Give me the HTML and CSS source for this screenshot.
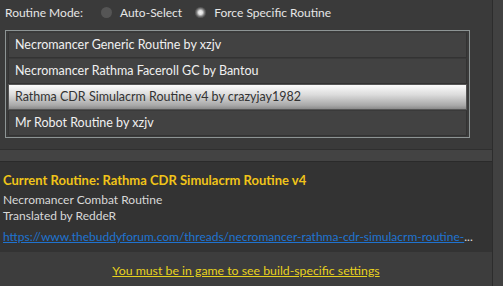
FILE: index.html
```html
<!DOCTYPE html>
<html lang="en">
<head>
    <meta charset="UTF-8">
    <title>Routine Settings</title>
    <link rel="stylesheet" href="styles.css">
</head>
<body>
    <div class="app">
        <div class="main">
            <div class="mode-panel">
                <div class="mode-row">
                    <span class="mode-label">Routine Mode:</span>
                    <label class="radio"><span class="dot"></span>Auto-Select</label>
                    <label class="radio checked"><span class="dot"></span>Force Specific Routine</label>
                </div>
                <div class="list">
                    <div class="item">Necromancer Generic Routine by xzjv</div>
                    <div class="item">Necromancer Rathma Faceroll GC by Bantou</div>
                    <div class="item selected">Rathma CDR Simulacrm Routine v4 by crazyjay1982</div>
                    <div class="item">Mr Robot Routine by xzjv</div>
                </div>
            </div>
            <div class="spacer"></div>
            <div class="info">
                <div class="current">Current Routine: Rathma CDR Simulacrm Routine v4</div>
                <div class="desc">Necromancer Combat Routine</div>
                <div class="desc">Translated by ReddeR</div>
                <div class="link"><a href="#">https://www.thebuddyforum.com/threads/necromancer-rathma-cdr-simulacrm-routine-</a>...</div>
            </div>
            <div class="footer">
                <a href="#">You must be in game to see build-specific settings</a>
            </div>
        </div>
        <div class="side"></div>
    </div>
</body>
</html>
```

FILE: styles.css
```css
body {
    margin: 0;
    background-color: #3b3b3b;
    font-family: 'Lato', 'Noto Sans', sans-serif;
    font-size: 12px;
    color: #e6e6e6;
}

.app {
    display: flex;
    height: 286px;
}

.main {
    width: 492px;
    display: flex;
    flex-direction: column;
    border-right: 1px solid #2c2c2c;
}

.side {
    flex: 1;
    background-color: #414141;
}

.mode-panel {
    height: 149px;
    background-color: #3a3a3a;
    border-bottom: 1px solid #2f2f2f;
}

.mode-row {
    display: flex;
    align-items: center;
    height: 25px;
    padding-left: 5px;
}

.mode-label {
    margin-right: 18px;
}

.radio {
    display: flex;
    align-items: center;
    margin-right: 13px;
}

.dot {
    width: 11px;
    height: 11px;
    border-radius: 50%;
    background-color: #555555;
    margin-right: 8px;
}

.radio.checked .dot {
    background: radial-gradient(circle, #f4f4f4 0, #e0e0e0 2px, #7a7a7a 4px, #585858 5px);
}

.list {
    margin: 5px 0 0 5px;
    width: 459px;
    padding: 1px 2px;
    border: 1px solid #8d9494;
}

.item {
    height: 24px;
    line-height: 24px;
    padding-left: 6px;
    font-size: 12.5px;
    background-color: #424242;
    border: 1px solid #333333;
    border-top-color: #3a3a3a;
    color: #f0f0f0;
    white-space: nowrap;
}

.item.selected {
    background: linear-gradient(#fbfbfb, #dcdcdc 40%, #a8a8a8 85%, #8a8a8a);
    color: #333333;
    border-color: #555555;
}

.spacer {
    height: 11px;
    background-color: #434343;
}

.info {
    height: 91px;
    background-color: #333333;
    border-top: 1px solid #2a2a2a;
    padding-left: 3px;
    padding-top: 8px;
    box-sizing: border-box;
}

.current {
    color: #f0c419;
    font-weight: bold;
    font-size: 13px;
    line-height: 20px;
    margin-bottom: 2px;
}

.desc {
    color: #d8d8d8;
    line-height: 16px;
}

.link {
    margin-top: 5px;
    color: #e0e0e0;
    white-space: nowrap;
}

.link a {
    color: #1f73d0;
}

.footer {
    flex: 1;
    display: flex;
    justify-content: center;
    align-items: center;
    padding-top: 3px;
    font-size: 12.3px;
    background-color: #3d3d3d;
}

.footer a {
    color: #e8d21e;
}
```
